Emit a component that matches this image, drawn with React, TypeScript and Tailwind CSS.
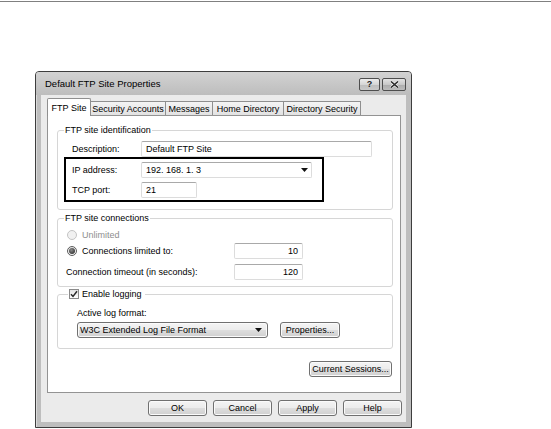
import React from "react";

const btn =
  "flex items-center justify-center border border-[#707070] rounded-[3px] bg-[linear-gradient(to_bottom,#f4f4f4_0%,#ececec_50%,#dedede_50%,#d0d0d0_100%)] shadow-[inset_0_0_0_1px_#fbfbfb] text-black";

const input =
  "h-[16px] bg-white border border-[#dcdcdc] border-t-[#a9a9a9] rounded-[2px] flex items-center";

function Radio({ checked, disabled }: { checked?: boolean; disabled?: boolean }) {
  return (
    <span
      className={
        disabled
          ? "w-[10px] h-[10px] rounded-full border border-[#c4c4c4] bg-[#f1f1f1] flex items-center justify-center shrink-0"
          : "w-[10px] h-[10px] rounded-full border border-[#5c5c5c] bg-[linear-gradient(to_bottom,#e6e6e6,#fafafa)] flex items-center justify-center shrink-0"
      }
    >
      {checked && <span className="w-[6px] h-[6px] rounded-full bg-[radial-gradient(circle_at_40%_35%,#8a8a8a,#1f1f1f)]" />}
    </span>
  );
}

function Checkbox() {
  return (
    <span className="w-[10px] h-[10px] border border-[#8a8a8a] bg-[linear-gradient(to_bottom,#e4e4e4,#ffffff)] flex items-center justify-center shrink-0">
      <svg width="8" height="8" viewBox="0 0 8 8">
        <path d="M1 4.2 L3 6.4 L7 1.2" fill="none" stroke="#2a2a2a" strokeWidth="1.5" />
      </svg>
    </span>
  );
}

function Arrow() {
  return (
    <svg width="7" height="4" viewBox="0 0 7 4">
      <path d="M0 0 H7 L3.5 4 Z" fill="#111" />
    </svg>
  );
}

export default function App() {
  return (
    <div className="w-[551px] h-[429px] bg-white overflow-hidden font-['Liberation_Sans',Arial,sans-serif] text-[9px] leading-[12px] text-black">
      <div className="h-[1px] mt-[1px] bg-[#808080]" />

      {/* window */}
      <div className="ml-[35px] mt-[69px] w-[377px] h-[357px] border border-[#3d3d3d] rounded-t-[4px] bg-[#bebebe] shadow-[inset_1px_1px_0_#dadada] flex flex-col">
        {/* title bar */}
        <div className="h-[23px] flex items-center pl-[9px] pr-[5px] bg-[linear-gradient(to_bottom,#d2d2d2,#bdbdbd)] rounded-t-[3px]">
          <span className="text-[9.5px] leading-[12px] pt-[1px]">Default FTP Site Properties</span>
          <div className="ml-auto flex gap-[2px] mt-[1px]">
            <div className="w-[21px] h-[13px] border border-[#4e4e4e] rounded-[2px] bg-[linear-gradient(to_bottom,#ececec_0%,#d6d6d6_50%,#bdbdbd_50%,#c9c9c9_100%)] flex items-center justify-center">
              <span className="font-bold text-[9px] leading-[9px] text-[#222]">?</span>
            </div>
            <div className="w-[24px] h-[13px] border border-[#4e4e4e] rounded-[2px] bg-[linear-gradient(to_bottom,#e2e2e2_0%,#c8c8c8_50%,#ababab_50%,#bcbcbc_100%)] flex items-center justify-center">
              <svg width="9" height="7" viewBox="0 0 9 7">
                <path d="M1 0.5 L8 6.5 M8 0.5 L1 6.5" stroke="#ffffff" strokeWidth="2.6" />
                <path d="M1 0.5 L8 6.5 M8 0.5 L1 6.5" stroke="#2b2b2b" strokeWidth="1.6" />
              </svg>
            </div>
          </div>
        </div>

        {/* client */}
        <div className="ml-[5px] w-[365px] h-[327px] bg-[#ebebeb] pt-[3px]">
          {/* tabs */}
          <div className="ml-[6px] flex items-end h-[17px]">
            <div className="relative z-10 w-[44px] h-[18px] -mb-px bg-white border border-b-0 border-[#8f8f8f] rounded-t-[2px] flex items-center justify-center pt-[1px]">
              FTP Site
            </div>
            <div className="-ml-px w-[76px] h-[14px] border border-b-0 border-[#8f8f8f] bg-[linear-gradient(to_bottom,#f4f4f4,#e2e2e2)] flex items-center justify-center pt-[1px]">
              Security Accounts
            </div>
            <div className="-ml-px w-[48px] h-[14px] border border-b-0 border-[#8f8f8f] bg-[linear-gradient(to_bottom,#f4f4f4,#e2e2e2)] flex items-center justify-center pt-[1px]">
              Messages
            </div>
            <div className="-ml-px w-[72px] h-[14px] border border-b-0 border-[#8f8f8f] bg-[linear-gradient(to_bottom,#f4f4f4,#e2e2e2)] flex items-center justify-center pt-[1px]">
              Home Directory
            </div>
            <div className="-ml-px w-[78px] h-[14px] border border-b-0 border-[#8f8f8f] bg-[linear-gradient(to_bottom,#f4f4f4,#e2e2e2)] flex items-center justify-center pt-[1px]">
              Directory Security
            </div>
          </div>

          {/* panel */}
          <div className="ml-[6px] w-[354px] h-[278px] bg-white border border-[#939393] flex flex-col">
            {/* group 1 */}
            <fieldset className="mt-[8px] ml-[9px] w-[336px] border border-[#d6d6d6] rounded-[3px] pl-[6px] pt-[5px] pb-[7px]">
              <legend className="px-[1px] leading-[12px]">FTP site identification</legend>
              <div className="flex items-center h-[16px] ml-[8px]">
                <span className="w-[69px]">Description:</span>
                <div className={input + " w-[231px] px-[4px]"}>Default FTP Site</div>
              </div>
              <div className="border-2 border-black w-[260px] pt-[3px] pb-[2px] pl-[6px]">
                <div className="flex items-center h-[16px]">
                  <span className="w-[69px]">IP address:</span>
                  <div className={input + " w-[171px] pl-[4px] pr-[3px]"}>
                    <span>192. 168. 1. 3</span>
                    <span className="ml-auto flex">
                      <Arrow />
                    </span>
                  </div>
                </div>
                <div className="flex items-center h-[16px] mt-[4px]">
                  <span className="w-[69px]">TCP port:</span>
                  <div className={input + " w-[56px] px-[4px]"}>21</div>
                </div>
              </div>
            </fieldset>

            {/* group 2 */}
            <fieldset className="mt-[2px] ml-[9px] w-[336px] border border-[#d6d6d6] rounded-[3px] pl-[6px] pt-[3px] pb-[6px]">
              <legend className="px-[1px] leading-[12px]">FTP site connections</legend>
              <div className="flex items-center h-[16px] ml-[3px]">
                <Radio disabled />
                <span className="ml-[5px] text-[#8e8e8e]">Unlimited</span>
              </div>
              <div className="flex items-center h-[16px]">
                <div className="w-[170px] flex items-center pl-[3px]">
                  <Radio checked />
                  <span className="ml-[5px]">Connections limited to:</span>
                </div>
                <div className={input + " w-[69px] justify-end pr-[4px]"}>10</div>
              </div>
              <div className="flex items-center h-[16px] mt-[5px]">
                <span className="w-[170px] pl-[2px]">Connection timeout (in seconds):</span>
                <div className={input + " w-[69px] justify-end pr-[4px]"}>120</div>
              </div>
            </fieldset>

            {/* group 3 */}
            <fieldset className="mt-[1px] ml-[9px] w-[336px] border border-[#d6d6d6] rounded-[3px] pl-[6px] pt-[7px] pb-[10px]">
              <legend className="ml-[4px] pl-[1px] pr-[3px] leading-[12px] flex items-center h-[12px]">
                <Checkbox />
                <span className="ml-[3px]">Enable logging</span>
              </legend>
              <div className="ml-[13px] leading-[12px]">Active log format:</div>
              <div className="ml-[13px] mt-[3px] flex items-center">
                <div className={btn + " w-[191px] h-[16px] !justify-start pl-[2px] pr-[5px]"}>
                  <span>W3C Extended Log File Format</span>
                  <span className="ml-auto flex">
                    <Arrow />
                  </span>
                </div>
                <div className={btn + " ml-[12px] w-[60px] h-[16px]"}>Properties...</div>
              </div>
            </fieldset>

            <div className="mt-[12px] flex justify-end pr-[8px]">
              <div className={btn + " w-[83px] h-[16px]"}>Current Sessions...</div>
            </div>
          </div>

          {/* bottom buttons */}
          <div className="mt-[7px] ml-[107px] flex gap-[6px]">
            <div className={btn + " w-[59px] h-[16px]"}>OK</div>
            <div className={btn + " w-[59px] h-[16px]"}>Cancel</div>
            <div className={btn + " w-[59px] h-[16px]"}>Apply</div>
            <div className={btn + " w-[59px] h-[16px]"}>Help</div>
          </div>
        </div>
      </div>
    </div>
  );
}
